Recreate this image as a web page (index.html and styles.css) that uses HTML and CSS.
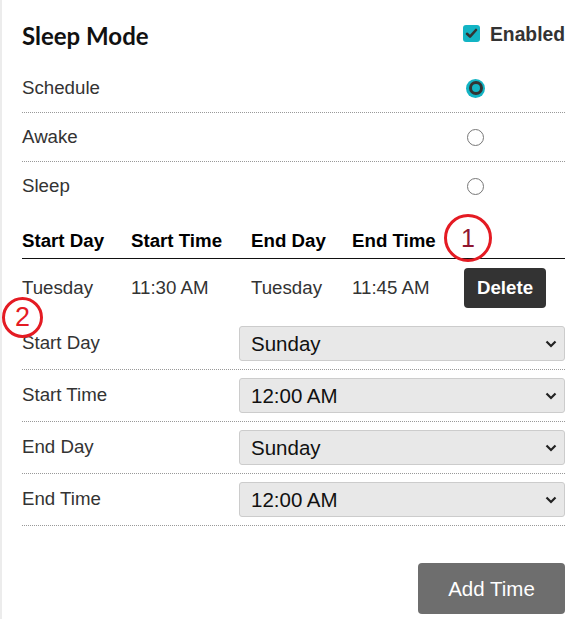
FILE: index.html
```html
<!DOCTYPE html>
<html>
<head>
<meta charset="utf-8">
<link rel="stylesheet" href="styles.css">
</head>
<body>
<div class="panel">
  <div class="title-row">
    <h1 class="title">Sleep Mode</h1>
    <label class="enabled">
      <span class="checkbox">
        <svg width="17" height="17" viewBox="0 0 17 17"><path d="M4 8.8 L7 11.6 L13 5" fill="none" stroke="#333" stroke-width="2.6" stroke-linecap="round" stroke-linejoin="round"/></svg>
      </span>
      <span>Enabled</span>
    </label>
  </div>

  <div class="mode-row dotted">
    <span>Schedule</span>
    <span class="radio checked"><span class="ring"></span></span>
  </div>
  <div class="mode-row dotted">
    <span>Awake</span>
    <span class="radio"></span>
  </div>
  <div class="mode-row">
    <span>Sleep</span>
    <span class="radio"></span>
  </div>

  <div class="sched">
    <div class="sched-head">
      <span>Start Day</span><span>Start Time</span><span>End Day</span><span>End Time</span><span class="anchor"><span class="badge badge-1">1</span></span>
    </div>
    <div class="sched-row">
      <span>Tuesday</span><span>11:30 AM</span><span>Tuesday</span><span>11:45 AM</span>
      <span><button class="delete">Delete</button></span>
    </div>
  </div>

  <div class="form">
    <span class="badge badge-2">2</span>
    <div class="form-row">
      <span>Start Day</span>
      <div class="select-wrap">
        <select><option>Sunday</option></select>
        <svg class="chev" width="12" height="8" viewBox="0 0 12 8"><path d="M1.5 1.5 L6 6 L10.5 1.5" fill="none" stroke="#222" stroke-width="2.2"/></svg>
      </div>
    </div>
    <div class="form-row">
      <span>Start Time</span>
      <div class="select-wrap">
        <select><option>12:00 AM</option></select>
        <svg class="chev" width="12" height="8" viewBox="0 0 12 8"><path d="M1.5 1.5 L6 6 L10.5 1.5" fill="none" stroke="#222" stroke-width="2.2"/></svg>
      </div>
    </div>
    <div class="form-row">
      <span>End Day</span>
      <div class="select-wrap">
        <select><option>Sunday</option></select>
        <svg class="chev" width="12" height="8" viewBox="0 0 12 8"><path d="M1.5 1.5 L6 6 L10.5 1.5" fill="none" stroke="#222" stroke-width="2.2"/></svg>
      </div>
    </div>
    <div class="form-row">
      <span>End Time</span>
      <div class="select-wrap">
        <select><option>12:00 AM</option></select>
        <svg class="chev" width="12" height="8" viewBox="0 0 12 8"><path d="M1.5 1.5 L6 6 L10.5 1.5" fill="none" stroke="#222" stroke-width="2.2"/></svg>
      </div>
    </div>
  </div>

  <div class="actions">
    <button class="add">Add Time</button>
  </div>
</div>
</body>
</html>
```

FILE: styles.css
```css
html, body {
  margin: 0;
  padding: 0;
  background: #fff;
}
body {
  font-family: "Liberation Sans", Arial, sans-serif;
  color: #333;
  font-size: 18.7px;
}
.panel {
  border-left: 2px solid #ececec;
  padding: 0 15px 0 20px;
  min-height: 619px;
  box-sizing: border-box;
}
.title-row {
  display: flex;
  justify-content: space-between;
  align-items: center;
  height: 64px;
  padding-top: 6px;
  box-sizing: border-box;
}
.title {
  margin: 0;
  font-family: Lato, sans-serif;
  font-weight: 700;
  font-size: 24px;
  color: #111;
}
.enabled {
  display: flex;
  align-items: center;
  gap: 10px;
  font-weight: 700;
  font-size: 19.3px;
  color: #333;
  margin-top: 0;
}
.checkbox {
  width: 17px;
  height: 17px;
  border-radius: 3px;
  background: #13b4c4;
  display: flex;
  margin-top: -4px;
}
.mode-row {
  display: flex;
  justify-content: space-between;
  align-items: center;
  height: 48px;
  padding-right: 81px;
}
.mode-row.dotted {
  border-bottom: 1px dotted #999;
}
.radio {
  width: 17px;
  height: 17px;
  border: 1.5px solid #777;
  border-radius: 50%;
  box-sizing: border-box;
  display: flex;
  align-items: center;
  justify-content: center;
}
.radio.checked {
  width: 19px;
  height: 19px;
  border: none;
  background: #13b4c4;
  margin-right: -1px;
}
.radio .ring {
  width: 14px;
  height: 14px;
  border: 3px solid #333;
  border-radius: 50%;
  box-sizing: border-box;
  background: #13b4c4;
}
.sched {
  margin-top: 16px;
}
.sched-head, .sched-row {
  display: grid;
  grid-template-columns: 109px 120px 101px 112px 1fr;
  align-items: center;
}
.sched-head {
  font-weight: 700;
  color: #000;
  height: 33px;
  border-bottom: 1.5px solid #111;
  padding-bottom: 2px;
  box-sizing: border-box;
}
.sched-row {
  height: 59px;
  padding-bottom: 2px;
  box-sizing: border-box;
}
.anchor {
  position: relative;
  height: 100%;
}
.badge {
  position: absolute;
  border: 3px solid #e41b23;
  border-radius: 50%;
  box-sizing: border-box;
  display: flex;
  align-items: center;
  justify-content: center;
  font-family: "Liberation Sans", Arial, sans-serif;
  font-weight: 400;
  background: transparent;
}
.badge-1 {
  left: -20px;
  top: -12px;
  width: 48px;
  height: 48px;
  color: #8f1630;
  font-size: 25px;
}
.badge-2 {
  left: -20px;
  top: -21px;
  color: #e41b23;
  width: 41px;
  height: 41px;
  font-size: 27px;
}
.delete {
  font-family: "Liberation Sans", Arial, sans-serif;
  font-weight: 700;
  font-size: 18.7px;
  color: #fff;
  background: #333;
  border: none;
  border-radius: 4px;
  width: 82px;
  height: 40px;
  padding: 0;
}
.form {
  position: relative;
}
.form-row {
  display: grid;
  grid-template-columns: 217px 1fr;
  align-items: center;
  height: 52px;
  border-bottom: 1px dotted #999;
  box-sizing: border-box;
  padding-bottom: 1px;
}
.select-wrap {
  position: relative;
}
.select-wrap select {
  appearance: none;
  -webkit-appearance: none;
  width: 100%;
  height: 35px;
  background: #e8e8e8;
  border: 1px solid #ccc;
  border-radius: 3px;
  font-family: "Liberation Sans", Arial, sans-serif;
  font-size: 20.5px;
  color: #111;
  padding: 0 0 0 11px;
  margin: 0;
  display: block;
}
.chev {
  position: absolute;
  right: 8px;
  top: 14px;
  pointer-events: none;
}
.actions {
  display: flex;
  justify-content: flex-end;
  padding-top: 37px;
}
.add {
  font-family: "Liberation Sans", Arial, sans-serif;
  font-size: 20.5px;
  color: #fff;
  background: #6e6e6e;
  border: none;
  border-radius: 4px;
  width: 147px;
  height: 51px;
  padding: 0;
}
```
